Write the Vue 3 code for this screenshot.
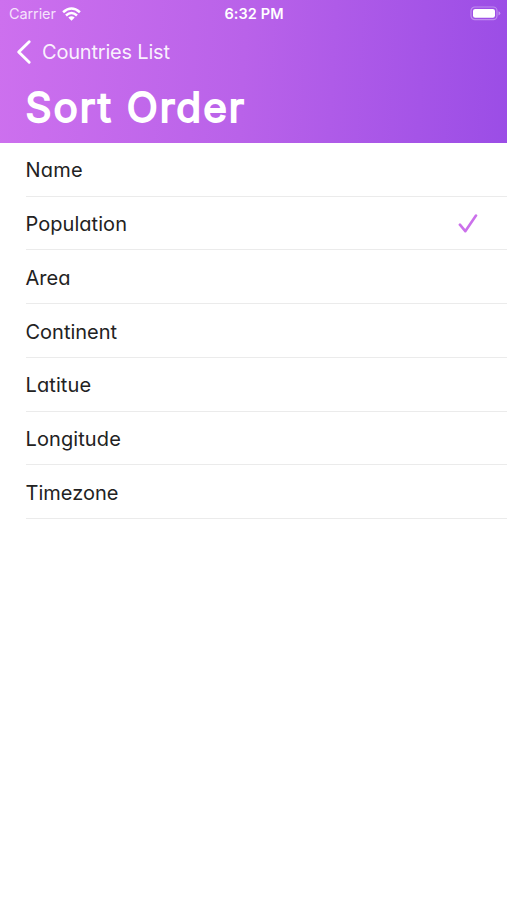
<script setup>
import { ref } from 'vue'

const options = [
  { label: 'Name', spacing: 0.2 },
  { label: 'Population', spacing: 0.05 },
  { label: 'Area', spacing: 0 },
  { label: 'Continent', spacing: 0 },
  { label: 'Latitue', spacing: 0.1 },
  { label: 'Longitude', spacing: 0.1 },
  { label: 'Timezone', spacing: 0 },
]
const selected = ref('Population')
</script>

<template>
  <main class="screen">
    <header class="header">
      <div class="status">
        <div class="carrier">
          <span>Carrier</span>
          <svg class="wifi" viewBox="0 0 19 14" width="19" height="14">
            <g fill="none" stroke="#fff" stroke-width="2.6">
              <path d="M1.1 5.2Q9.5-2.2 17.9 5.2" />
              <path d="M4 8.4Q9.5 3.6 15 8.4" />
            </g>
            <path d="M6.3 10.5Q9.5 7.8 12.7 10.5L9.5 13.7Z" fill="#fff" />
          </svg>
        </div>
        <span class="time">6:32 PM</span>
        <svg class="battery" viewBox="0 0 31 15" width="31" height="15">
          <rect x="1" y="1" width="26" height="12.6" rx="3.8" fill="none" stroke="#fff" stroke-opacity=".35" stroke-width="1.2" />
          <rect x="3" y="2.9" width="22" height="8.8" rx="2.2" fill="#fff" />
          <path d="M28.5 5.2Q30.3 5.8 30.3 7.3T28.5 9.4Z" fill="#fff" fill-opacity=".4" />
        </svg>
      </div>
      <button class="back">
        <svg viewBox="0 0 16 26" width="16" height="26">
          <path d="M13.2 2.7L2.7 13L13.2 23.3" fill="none" stroke="#fff" stroke-width="2.9" stroke-linecap="round" stroke-linejoin="round" />
        </svg>
        <span>Countries List</span>
      </button>
      <h1 class="title">Sort Order</h1>
    </header>
    <ul class="list">
      <li v-for="item in options" :key="item.label" class="row" @click="selected = item.label">
        <span :style="{ letterSpacing: item.spacing + 'px' }">{{ item.label }}</span>
        <svg v-if="selected === item.label" class="check" viewBox="0 0 20 20" width="20" height="20">
          <path d="M1.9 10.7L7.3 17.2L18 1.6" fill="none" stroke="#cb70eb" stroke-width="2.6" stroke-linecap="round" stroke-linejoin="round" />
        </svg>
      </li>
    </ul>
  </main>
</template>

<style>
body {
  margin: 0;
  background: #fff;
}
</style>

<style scoped>
.screen {
  width: 100%;
  height: 900px;
  overflow: hidden;
  background: #fff;
  font-family: Inter, "Liberation Sans", sans-serif;
}
.header {
  box-sizing: border-box;
  height: 142.5px;
  background: linear-gradient(93deg, #cd70ee 0%, #b962e9 48%, #9b4de6 100%);
  color: #fff;
}
.status {
  display: grid;
  grid-template-columns: 1fr auto 1fr;
  align-items: center;
  height: 27px;
  padding: 0 6px 0 9px;
}
.carrier {
  display: flex;
  align-items: center;
  gap: 6px;
  font-size: 14.5px;
  letter-spacing: -0.1px;
  color: rgba(255, 255, 255, 0.82);
}
.time {
  margin-right: 2px;
  font-size: 14.5px;
  font-weight: 600;
  letter-spacing: 0.1px;
}
.battery {
  justify-self: end;
}
.back {
  display: flex;
  align-items: center;
  gap: 10px;
  height: 50px;
  margin: 0;
  padding: 0 16px;
  border: 0;
  background: none;
  color: rgba(255, 255, 255, 0.92);
  font: 400 20px/50px Inter, "Liberation Sans", sans-serif;
  letter-spacing: -0.2px;
}
.title {
  margin: 0;
  padding: 0 0 0 25.5px;
  font-size: 40.5px;
  line-height: 61px;
  font-weight: 400;
  letter-spacing: 2px;
  word-spacing: 0.5px;
  font-feature-settings: "cv11";
  -webkit-text-stroke: 1.8px #fff;
  stroke-linejoin: round;
}
.list {
  margin: 0;
  padding: 0 0 0 25.5px;
  list-style: none;
}
.row {
  box-sizing: border-box;
  display: flex;
  align-items: center;
  justify-content: space-between;
  height: 53.75px;
  padding: 1px 29px 0 0;
  background: linear-gradient(#ebebeb, #ebebeb) bottom / 100% 1px no-repeat;
  color: #222;
  font-size: 20px;
  font-weight: 400;
  font-feature-settings: "cv11";
}
.row:first-child {
  height: 54.2px;
}
</style>
